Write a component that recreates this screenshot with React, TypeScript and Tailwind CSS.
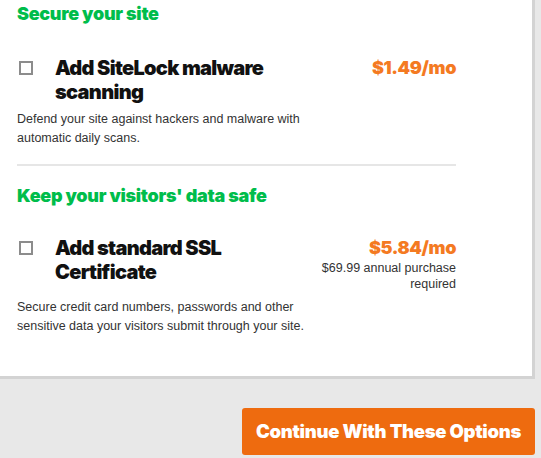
import React from "react";

const heading = "font-['Inter',sans-serif] font-black text-[18px] leading-[28px] text-[#00bd4b] tracking-[-0.3px]";
const title = "font-['Inter',sans-serif] font-black text-[20px] leading-[24px] text-[#111111] tracking-[-0.7px]";
const price = "font-['Inter',sans-serif] font-black text-[18px] leading-[24px] text-[#f47a22] tracking-[-0.4px]";
const body = "font-['Liberation_Sans',Arial,sans-serif] text-[12.5px] leading-[19px] text-[#333333]";

function Item({
  name,
  cost,
  note,
  desc,
}: {
  name: string;
  cost: string;
  note?: string;
  desc: string;
}) {
  return (
    <div>
      <div className="flex">
        <div className="w-[38px] shrink-0 pt-[5px] pl-[2px]">
          <div className="w-[14px] h-[14px] border-2 border-[#8c8c8c] bg-white" />
        </div>
        <div className={`w-[250px] shrink-0 ${title}`}>{name}</div>
        <div className="flex-1 text-right">
          <div className={price}>{cost}</div>
          {note && (
            <div className="font-['Liberation_Sans',Arial,sans-serif] text-[12.5px] leading-[16px] text-[#333333]">
              {note}
            </div>
          )}
        </div>
      </div>
      <p className={`mt-[6px] w-[300px] ${body}`}>{desc}</p>
    </div>
  );
}

export default function App() {
  return (
    <div className="w-[541px] h-[458px] bg-[#e8e8e8] overflow-hidden">
      <div className="w-[535px] bg-white border-r-[3px] border-b-[3px] border-[#d3d3d3] pl-[17px] pr-[76px] pb-[40px]">
        <h2 className={heading}>Secure your site</h2>
        <div className="mt-[28px]">
          <Item
            name="Add SiteLock malware scanning"
            cost="$1.49/mo"
            desc="Defend your site against hackers and malware with automatic daily scans."
          />
        </div>
        <div className="mt-[16px] h-[2px] bg-[#e6e6e6]" />
        <h2 className={`mt-[16px] ${heading}`}>Keep your visitors' data safe</h2>
        <div className="mt-[26px]">
          <Item
            name="Add standard SSL Certificate"
            cost="$5.84/mo"
            note="$69.99 annual purchase required"
            desc="Secure credit card numbers, passwords and other sensitive data your visitors submit through your site."
          />
        </div>
      </div>
      <div className="w-[535px] flex justify-end mt-[29px]">
        <button className="w-[293px] h-[47px] rounded-[3px] bg-[#ee6b0f] text-white font-['Inter',sans-serif] font-black text-[18.5px] tracking-[-0.3px]">
          Continue With These Options
        </button>
      </div>
    </div>
  );
}
